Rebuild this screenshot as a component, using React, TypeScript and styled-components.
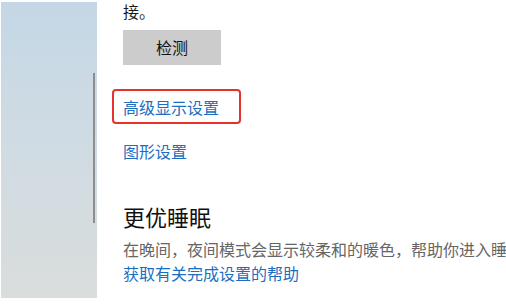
import React from "react";
import styled, { createGlobalStyle } from "styled-components";

const Global = createGlobalStyle`
  html, body { margin: 0; padding: 0; background: #ffffff; }
  body { font-family: "Noto Sans CJK SC", "Noto Sans", sans-serif; }
`;

const Page = styled.div`
  display: flex;
  width: 506px;
  height: 305px;
  overflow: hidden;
  background: #ffffff;
`;

const Sidebar = styled.div`
  position: relative;
  flex: 0 0 96px;
  margin: 2px 0 7px 1px;
  background: linear-gradient(180deg, #c4d7e6 0%, #cfdbe3 45%, #d9dddc 100%);
`;

const ScrollThumb = styled.div`
  position: absolute;
  left: 92px;
  top: 71px;
  width: 2px;
  height: 150px;
  background: #8c8e90;
`;

const Content = styled.div`
  flex: 1;
  display: flex;
  flex-direction: column;
  align-items: flex-start;
  padding-left: 26px;
  white-space: nowrap;
  overflow: hidden;
`;

const Text = styled.div<{ $color?: string; $mt?: number }>`
  font-size: 16px;
  line-height: 22px;
  color: ${(p) => p.$color ?? "#1b1b1b"};
  margin-top: ${(p) => p.$mt ?? 0}px;
`;

const Button = styled.div`
  margin-top: 8px;
  width: 98px;
  height: 35px;
  background: #cccccc;
  color: #111111;
  font-size: 16px;
  line-height: 35px;
  text-align: center;
`;

const Highlight = styled.div`
  margin-top: 24px;
  margin-left: -11px;
  height: 31px;
  padding: 0 20px 0 9px;
  border: 2px solid #e5322b;
  border-radius: 4px;
  display: flex;
  align-items: center;
`;

const Link = styled.span`
  font-size: 16px;
  line-height: 22px;
  color: #1c6fbf;
`;

const LinkRow = styled.div<{ $mt: number }>`
  margin-top: ${(p) => p.$mt}px;
  display: flex;
`;

const Heading = styled.div`
  margin-top: 39px;
  font-size: 22px;
  line-height: 30px;
  color: #111111;
`;

export default function App() {
  return (
    <>
      <Global />
      <Page>
        <Sidebar>
          <ScrollThumb />
        </Sidebar>
        <Content>
          <Text>接。</Text>
          <Button>检测</Button>
          <Highlight>
            <Link>高级显示设置</Link>
          </Highlight>
          <LinkRow $mt={16}>
            <Link>图形设置</Link>
          </LinkRow>
          <Heading>更优睡眠</Heading>
          <Text $color="#666666" $mt={7}>
            在晚间，夜间模式会显示较柔和的暖色，帮助你进入睡眠。
          </Text>
          <LinkRow $mt={2}>
            <Link>获取有关完成设置的帮助</Link>
          </LinkRow>
        </Content>
      </Page>
    </>
  );
}
